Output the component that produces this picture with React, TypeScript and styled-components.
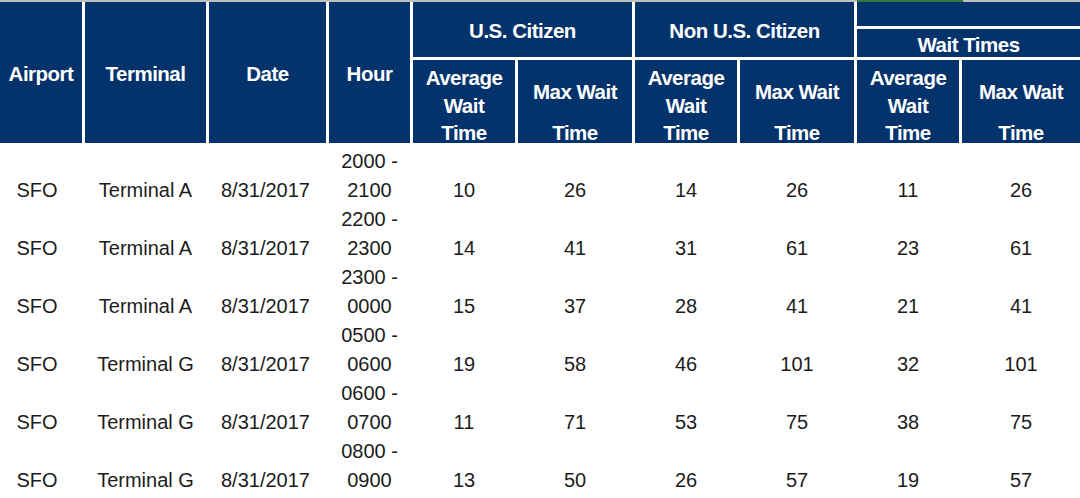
import React from "react";
import styled, { createGlobalStyle } from "styled-components";

const GlobalStyle = createGlobalStyle`
  html, body {
    margin: 0;
    padding: 0;
    background: #ffffff;
  }
  body {
    font-family: "Liberation Sans", Arial, sans-serif;
  }
`;

const NAVY = "#04326b";
const COLUMNS = "82px 121px 117px 81px 102px 114px 102px 114px 102px 1fr";

type Row = {
  airport: string;
  terminal: string;
  date: string;
  hour: [string, string];
  values: number[];
};

const rows: Row[] = [
  { airport: "SFO", terminal: "Terminal A", date: "8/31/2017", hour: ["2000 -", "2100"], values: [10, 26, 14, 26, 11, 26] },
  { airport: "SFO", terminal: "Terminal A", date: "8/31/2017", hour: ["2200 -", "2300"], values: [14, 41, 31, 61, 23, 61] },
  { airport: "SFO", terminal: "Terminal A", date: "8/31/2017", hour: ["2300 -", "0000"], values: [15, 37, 28, 41, 21, 41] },
  { airport: "SFO", terminal: "Terminal G", date: "8/31/2017", hour: ["0500 -", "0600"], values: [19, 58, 46, 101, 32, 101] },
  { airport: "SFO", terminal: "Terminal G", date: "8/31/2017", hour: ["0600 -", "0700"], values: [11, 71, 53, 75, 38, 75] },
  { airport: "SFO", terminal: "Terminal G", date: "8/31/2017", hour: ["0800 -", "0900"], values: [13, 50, 26, 57, 19, 57] },
];

const Page = styled.div`
  width: 1080px;
  background: #ffffff;
`;

const TopRule = styled.div`
  display: flex;
  height: 2px;
`;

const RuleSegment = styled.div<{ $color: string; $width?: number }>`
  background: ${(p) => p.$color};
  flex: ${(p) => (p.$width ? `0 0 ${p.$width}px` : "1 1 auto")};
`;

const HeaderGrid = styled.div`
  display: grid;
  grid-template-columns: ${COLUMNS};
  grid-template-rows: 55px 83px;
  gap: 3px;
  background: #ffffff;
`;

const HeadCell = styled.div<{ $rows?: number; $cols?: number }>`
  background: ${NAVY};
  color: #ffffff;
  font-weight: 700;
  font-size: 20.5px;
  letter-spacing: -0.5px;
  display: flex;
  align-items: center;
  justify-content: center;
  text-align: center;
  padding-top: 3px;
  grid-row: span ${(p) => p.$rows ?? 1};
  grid-column: span ${(p) => p.$cols ?? 1};
`;

const GroupStack = styled.div`
  grid-column: span 2;
  display: flex;
  flex-direction: column;
  gap: 3px;
`;

const GroupBlank = styled.div`
  background: ${NAVY};
  height: 26px;
`;

const GroupLabel = styled(HeadCell)`
  flex: 1;
  padding-top: 4px;
`;

const SubCell = styled.div<{ $gap: number; $top: number }>`
  background: ${NAVY};
  color: #ffffff;
  font-weight: 700;
  font-size: 20.5px;
  letter-spacing: -0.5px;
  line-height: 27.5px;
  display: flex;
  flex-direction: column;
  justify-content: flex-start;
  align-items: center;
  gap: ${(p) => p.$gap}px;
  padding-top: ${(p) => p.$top}px;
  overflow: hidden;
`;

const Body = styled.div`
  display: grid;
  grid-template-columns: ${COLUMNS};
  grid-auto-rows: 58px;
  column-gap: 3px;
  padding-top: 4px;
`;

const DataCell = styled.div<{ $nudge?: number }>`
  display: flex;
  flex-direction: column;
  justify-content: flex-end;
  align-items: center;
  font-size: 20px;
  line-height: 29px;
  color: #1c1c1c;
  padding-right: ${(p) => p.$nudge ?? 0}px;
`;

const subHeads = [
  { lines: ["Average", "Wait", "Time"], gap: 0, top: 4 },
  { lines: ["Max Wait", "Time"], gap: 13.5, top: 18 },
];

export default function App() {
  return (
    <>
      <GlobalStyle />
      <Page>
        <TopRule>
          <RuleSegment $color="#bfbfbf" $width={857} />
          <RuleSegment $color="#2f7a3c" $width={106} />
          <RuleSegment $color="#bfbfbf" />
        </TopRule>
        <HeaderGrid>
          <HeadCell $rows={2}>Airport</HeadCell>
          <HeadCell $rows={2}>Terminal</HeadCell>
          <HeadCell $rows={2}>Date</HeadCell>
          <HeadCell $rows={2}>Hour</HeadCell>
          <HeadCell $cols={2}>U.S. Citizen</HeadCell>
          <HeadCell $cols={2}>Non U.S. Citizen</HeadCell>
          <GroupStack>
            <GroupBlank />
            <GroupLabel>Wait Times</GroupLabel>
          </GroupStack>
          {[0, 1, 2].flatMap((g) =>
            subHeads.map((s, i) => (
              <SubCell key={`${g}-${i}`} $gap={s.gap} $top={s.top}>
                {s.lines.map((l) => (
                  <span key={l}>{l}</span>
                ))}
              </SubCell>
            ))
          )}
        </HeaderGrid>
        <Body>
          {rows.map((r, idx) => (
            <React.Fragment key={idx}>
              <DataCell $nudge={8}>{r.airport}</DataCell>
              <DataCell>{r.terminal}</DataCell>
              <DataCell $nudge={4}>{r.date}</DataCell>
              <DataCell>
                <span>{r.hour[0]}</span>
                <span>{r.hour[1]}</span>
              </DataCell>
              {r.values.map((v, i) => (
                <DataCell key={i}>{v}</DataCell>
              ))}
            </React.Fragment>
          ))}
        </Body>
      </Page>
    </>
  );
}
